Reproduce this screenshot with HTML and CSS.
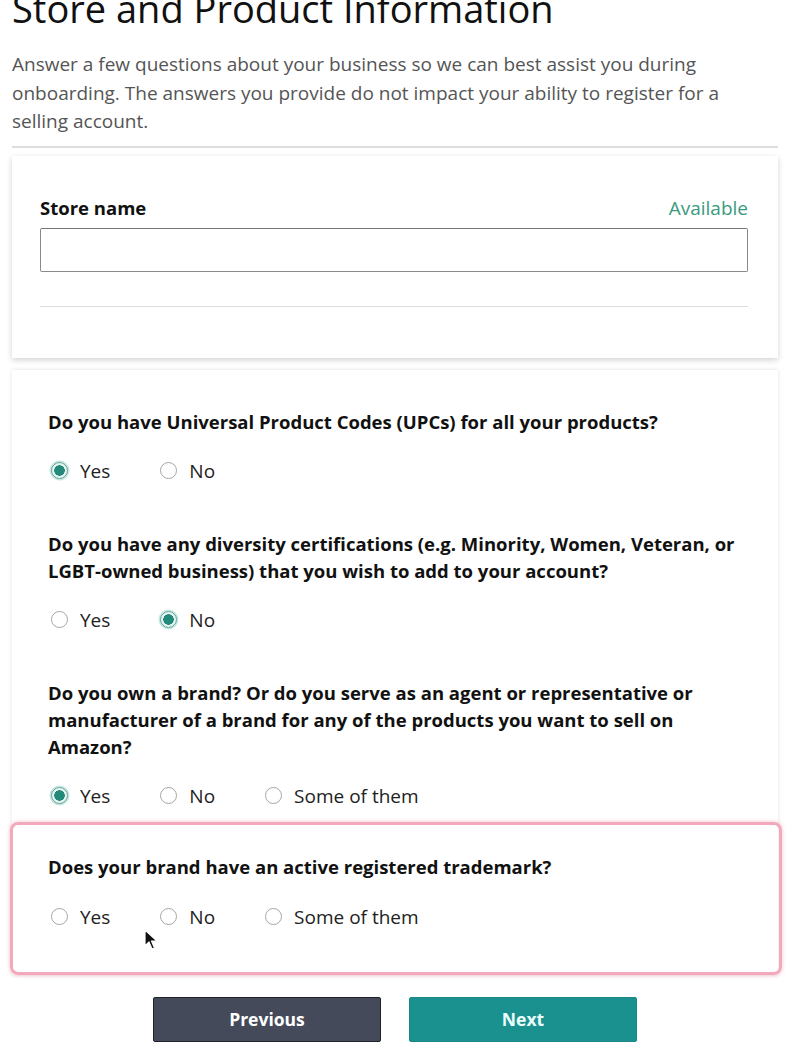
FILE: index.html
```html
<!DOCTYPE html>
<html lang="en">
<head>
    <meta charset="UTF-8">
    <meta name="viewport" content="width=device-width, initial-scale=1.0">
    <title>Store and Product Information</title>
    <link rel="stylesheet" href="styles.css">
</head>
<body>
    <div class="page">
        <h1 class="title">Store and Product Information</h1>
        <p class="intro">Answer a few questions about your business so we can best assist you during onboarding. The answers you provide do not impact your ability to register for a selling account.</p>
        <hr class="rule">

        <div class="card store-card">
            <div class="field-head">
                <label class="field-label" for="storeName">Store name</label>
                <span class="available">Available</span>
            </div>
            <input type="text" id="storeName" class="text-input">
            <div class="divider"></div>
        </div>

        <div class="card questions">
            <div class="question">
                <p class="question-text">Do you have Universal Product Codes (UPCs) for all your products?</p>
                <div class="options">
                    <span class="option"><span class="radio checked"></span>Yes</span>
                    <span class="option"><span class="radio"></span>No</span>
                </div>
            </div>
            <div class="question">
                <p class="question-text">Do you have any diversity certifications (e.g. Minority, Women, Veteran, or LGBT-owned business) that you wish to add to your account?</p>
                <div class="options">
                    <span class="option"><span class="radio"></span>Yes</span>
                    <span class="option"><span class="radio checked"></span>No</span>
                </div>
            </div>
            <div class="question">
                <p class="question-text">Do you own a brand? Or do you serve as an agent or representative or manufacturer of a brand for any of the products you want to sell on Amazon?</p>
                <div class="options">
                    <span class="option"><span class="radio checked"></span>Yes</span>
                    <span class="option"><span class="radio"></span>No</span>
                    <span class="option"><span class="radio"></span>Some of them</span>
                </div>
            </div>
            <div class="question highlight">
                <p class="question-text">Does your brand have an active registered trademark?</p>
                <div class="options">
                    <span class="option"><span class="radio"></span>Yes</span>
                    <span class="option"><span class="radio"></span>No</span>
                    <span class="option"><span class="radio"></span>Some of them</span>
                </div>
                <svg class="cursor" width="14" height="22" viewBox="0 0 14 22">
                    <path d="M1 1 L1 17 L5 13 L8 20 L10.5 19 L7.5 12 L13 12 Z" fill="#111" stroke="#fff" stroke-width="1.2" stroke-linejoin="round"/>
                </svg>
            </div>
        </div>

        <div class="actions">
            <button class="btn btn-prev">Previous</button>
            <button class="btn btn-next">Next</button>
        </div>
    </div>
</body>
</html>
```

FILE: styles.css
```css
body {
    margin: 0;
    background-color: #fff;
    font-family: "Open Sans", Arial, sans-serif;
    color: #111;
}
.page {
    width: 766px;
    padding-left: 12px;
}
.title {
    margin: -14px 0 0;
    font-size: 38px;
    line-height: 44px;
    font-weight: 400;
    color: #111;
}
.intro {
    margin: 20px 0 0;
    font-size: 19px;
    line-height: 28.5px;
    color: #555;
}
.rule {
    margin: 10px 0 0;
    border: none;
    border-top: 2px solid #ddd;
}
.card {
    background-color: #fff;
    box-shadow: 0 2px 6px rgba(0,0,0,0.18);
}
.store-card {
    margin-top: 8px;
    padding: 40px 30px 51px 28px;
}
.field-head {
    display: flex;
    justify-content: space-between;
    align-items: center;
    height: 24px;
}
.field-label {
    font-size: 18.5px;
    font-weight: 700;
    color: #111;
}
.available {
    font-size: 19px;
    color: #3a9a7e;
}
.text-input {
    display: block;
    width: 100%;
    height: 44px;
    margin-top: 8px;
    box-sizing: border-box;
    border: 1px solid #8a8a8a;
    border-top-color: #777;
    border-radius: 2px;
}
.divider {
    margin-top: 34px;
    border-top: 1px solid #ddd;
}
.questions {
    margin-top: 12px;
    padding: 38px 36px 0;
    box-shadow: 0 0 4px rgba(0,0,0,0.12);
}
.question + .question {
    margin-top: 47px;
}
.question-text {
    margin: 0;
    font-size: 18.5px;
    line-height: 27px;
    font-weight: 700;
    color: #111;
}
.options {
    display: flex;
    gap: 50px;
    margin-top: 24px;
    padding-left: 3px;
    height: 24px;
    align-items: center;
}
.option {
    display: flex;
    align-items: center;
    gap: 12px;
    font-size: 19px;
    color: #222;
}
.radio {
    width: 15px;
    height: 15px;
    border: 1.5px solid #a5a5a5;
    border-radius: 50%;
    background-color: #fff;
}
.radio.checked {
    border-color: #5f9c93;
    background: radial-gradient(circle, #23897b 0, #23897b 5px, #e6f5f2 5.5px);
    box-shadow: 0 0 0 1.5px #c4e8e1;
}
.question + .highlight {
    position: relative;
    margin: 14px -40px 0 -38px;
    padding: 28px 34px 43px 35px;
    border: 3px solid #f3a9bb;
    border-radius: 8px;
    box-shadow: 0 0 4px rgba(235,120,150,0.45);
}
.highlight .options {
    margin-top: 25px;
}
.cursor {
    position: absolute;
    left: 131px;
    top: 104px;
}
.actions {
    display: flex;
    justify-content: center;
    gap: 28px;
    margin-top: 22px;
}
.btn {
    width: 228px;
    height: 45px;
    font-family: "Open Sans", Arial, sans-serif;
    font-size: 17.5px;
    font-weight: 700;
    color: #fff;
    border-radius: 2px;
    cursor: pointer;
}
.btn-prev {
    background-color: #454a5b;
    border: 1px solid #1f222b;
}
.btn-next {
    background-color: #1b918f;
    border: 1px solid #1a8a88;
    color: #eafffb;
}
```
